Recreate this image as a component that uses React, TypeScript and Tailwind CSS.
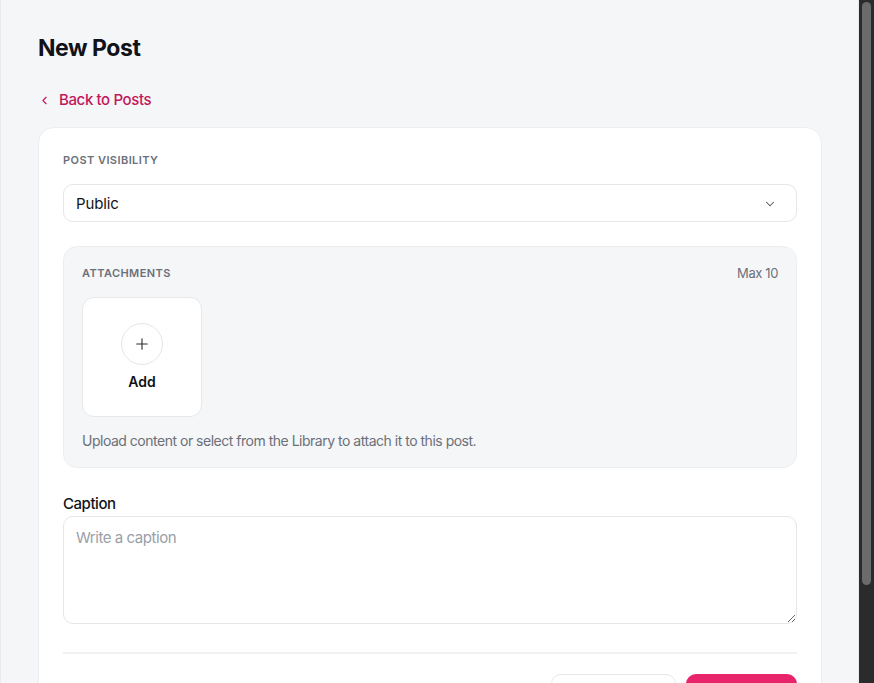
import { ChevronDown, ChevronLeft, Plus } from "lucide-react";

const font = { fontFamily: "Inter, 'Noto Sans', sans-serif" };

function Scrollbar() {
  return (
    <aside className="flex h-full w-[15px] shrink-0 justify-center bg-[#2b2b2b] pt-[2px]">
      <div className="h-[583px] w-[9px] rounded-full bg-[#6b6b6b]" />
    </aside>
  );
}

export default function App() {
  return (
    <div className="flex h-[683px] w-full overflow-hidden bg-[#f5f6f8] text-[#111318]" style={font}>
      <main className="min-w-0 flex-1 border-x border-[#e9eaed] pt-8 pr-9 pb-[60px] pl-[37px]">
        <h1 className="text-[23px] leading-8 font-bold tracking-[-0.02em]">New Post</h1>

        <a
          href="#"
          className="mt-[26px] flex items-center gap-2 text-[15px] leading-5 font-medium tracking-[-0.025em] text-[#c2185b]"
        >
          <ChevronLeft size={13} strokeWidth={2} />
          Back to Posts
        </a>

        <section className="mt-[17px] rounded-2xl border border-[#eceef1] bg-white p-6">
          <p className="text-[11px] leading-4 font-semibold tracking-[0.04em] text-[#6b7079] uppercase">
            Post visibility
          </p>
          <button
            type="button"
            className="mt-4 flex h-[38px] w-full items-center justify-between rounded-[10px] border border-[#e4e6ea] px-3 pt-[2px] text-left text-[15px] tracking-[-0.01em] text-[#111318]"
          >
            Public
            <ChevronDown size={14} strokeWidth={1.75} className="mr-[7px] text-[#4b4f57]" />
          </button>

          <div className="mt-6 rounded-[14px] border border-[#eceef1] bg-[#f5f6f8] px-[18px] pt-[18px] pb-4">
            <div className="flex items-center justify-between">
              <p className="text-[11px] leading-4 font-semibold tracking-[0.04em] text-[#6b7079] uppercase">
                Attachments
              </p>
              <span className="text-[13px] leading-4 tracking-[-0.03em] text-[#6b7079]">Max 10</span>
            </div>
            <button
              type="button"
              className="mt-4 flex h-[120px] w-[120px] flex-col items-center justify-center gap-2 rounded-xl border border-[#e6e8eb] bg-white"
            >
              <span className="flex h-[42px] w-[42px] items-center justify-center rounded-full border border-[#e4e6ea]">
                <Plus size={18} strokeWidth={1.5} className="text-[#2a2d33]" />
              </span>
              <span className="text-[14px] leading-[18px] font-semibold">Add</span>
            </button>
            <p className="mt-[14px] text-[14px] leading-5 tracking-[-0.035em] text-[#6b7079]">
              Upload content or select from the Library to attach it to this post.
            </p>
          </div>

          <label className="mt-6 block text-[15px] leading-6 font-medium tracking-[-0.03em]">Caption</label>
          <textarea
            placeholder="Write a caption"
            className="block h-[108px] w-full rounded-[10px] border border-[#e4e6ea] px-3 py-[10px] text-[15px] leading-[22px] tracking-[-0.03em] outline-none placeholder:text-[#9a9ea6]"
          />

          <div className="mt-7 border-t-2 border-[#f0f1f3] pt-5">
            <div className="flex items-center justify-between">
              <span className="pl-[6px] text-[14px] text-[#6b7079]">Draft</span>
              <div className="flex gap-[10px]">
                <button
                  type="button"
                  className="h-10 w-[125px] rounded-[10px] border border-[#e4e6ea] bg-white text-[14px] font-semibold"
                >
                  Cancel
                </button>
                <button
                  type="button"
                  className="h-10 w-[111px] rounded-[10px] bg-[#e8246a] text-[14px] font-semibold text-white"
                >
                  Publish
                </button>
              </div>
            </div>
          </div>
        </section>
      </main>
      <Scrollbar />
    </div>
  );
}
